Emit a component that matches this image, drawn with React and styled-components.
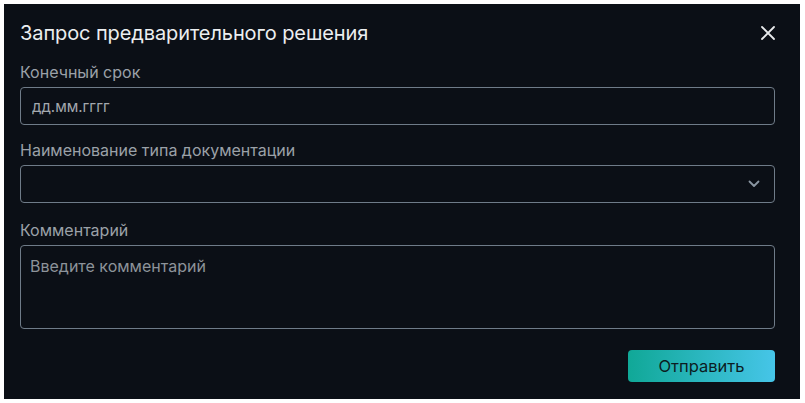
import React from "react";
import styled, { createGlobalStyle } from "styled-components";

const GlobalStyle = createGlobalStyle`
  html, body {
    margin: 0;
    padding: 0;
    background: #ffffff;
  }
  * {
    box-sizing: border-box;
  }
`;

const Page = styled.div`
  width: 805px;
  height: 403px;
  padding: 4px 5px 4px 4px;
`;

const Dialog = styled.div`
  width: 796px;
  height: 395px;
  background-color: #0b0f16;
  padding: 16px 25px 0 16px;
  font-family: Inter, "Noto Sans", sans-serif;
  display: flex;
  flex-direction: column;
`;

const Header = styled.div`
  display: flex;
  align-items: center;
  justify-content: space-between;
  height: 26px;
`;

const Title = styled.h2`
  margin: 0;
  font-size: 20px;
  font-weight: 400;
  line-height: 26px;
  color: #eceef0;
  letter-spacing: -0.1px;
`;

const CloseButton = styled.button`
  background: none;
  border: none;
  padding: 0;
  margin-right: -2px;
  width: 18px;
  height: 18px;
  display: flex;
  align-items: center;
  justify-content: center;
  cursor: pointer;
`;

const Field = styled.div`
  display: flex;
  flex-direction: column;
  margin-top: ${(p) => p.$top}px;
`;

const Label = styled.label`
  font-size: 16px;
  line-height: 20px;
  color: #9ba1a8;
  margin-bottom: 5px;
`;

const Input = styled.input`
  height: 38px;
  width: 100%;
  background: transparent;
  border: 1px solid #6f7b88;
  border-radius: 4px;
  padding: 0 11px;
  font-family: inherit;
  font-size: 15px;
  color: #e6e8ea;
  outline: none;
  &::placeholder {
    color: #a3a8ae;
  }
`;

const SelectBox = styled.div`
  height: 38px;
  border: 1px solid #6f7b88;
  border-radius: 4px;
  display: flex;
  align-items: center;
  justify-content: flex-end;
  padding-right: 14px;
`;

const TextArea = styled.textarea`
  height: 84px;
  width: 100%;
  resize: none;
  background: transparent;
  border: 1px solid #6f7b88;
  border-radius: 4px;
  padding: 10px 9px;
  font-family: inherit;
  font-size: 16px;
  line-height: 20px;
  color: #e6e8ea;
  outline: none;
  &::placeholder {
    color: #8d939a;
  }
`;

const Footer = styled.div`
  display: flex;
  justify-content: flex-end;
  margin-top: 21px;
`;

const SubmitButton = styled.button`
  width: 147px;
  height: 32px;
  border: none;
  border-radius: 4px;
  background: linear-gradient(90deg, #10a897 0%, #46c5e8 100%);
  font-family: inherit;
  font-size: 16.5px;
  color: #0c1c22;
  cursor: pointer;
`;

const App = () => (
  <>
    <GlobalStyle />
    <Page>
      <Dialog>
        <Header>
          <Title>Запрос предварительного решения</Title>
          <CloseButton aria-label="Закрыть">
            <svg width="14" height="14" viewBox="0 0 14 14">
              <path d="M1 1L13 13M13 1L1 13" stroke="#e8eaec" strokeWidth="1.8" strokeLinecap="round" />
            </svg>
          </CloseButton>
        </Header>
        <Field $top={16}>
          <Label>Конечный срок</Label>
          <Input placeholder="дд.мм.гггг" />
        </Field>
        <Field $top={15}>
          <Label>Наименование типа документации</Label>
          <SelectBox>
            <svg width="12" height="8" viewBox="0 0 12 8">
              <path d="M1.5 1.5L6 6L10.5 1.5" stroke="#8a96a2" strokeWidth="1.8" fill="none" strokeLinecap="round" strokeLinejoin="round" />
            </svg>
          </SelectBox>
        </Field>
        <Field $top={17}>
          <Label>Комментарий</Label>
          <TextArea placeholder="Введите комментарий" />
        </Field>
        <Footer>
          <SubmitButton>Отправить</SubmitButton>
        </Footer>
      </Dialog>
    </Page>
  </>
);

export default App;
